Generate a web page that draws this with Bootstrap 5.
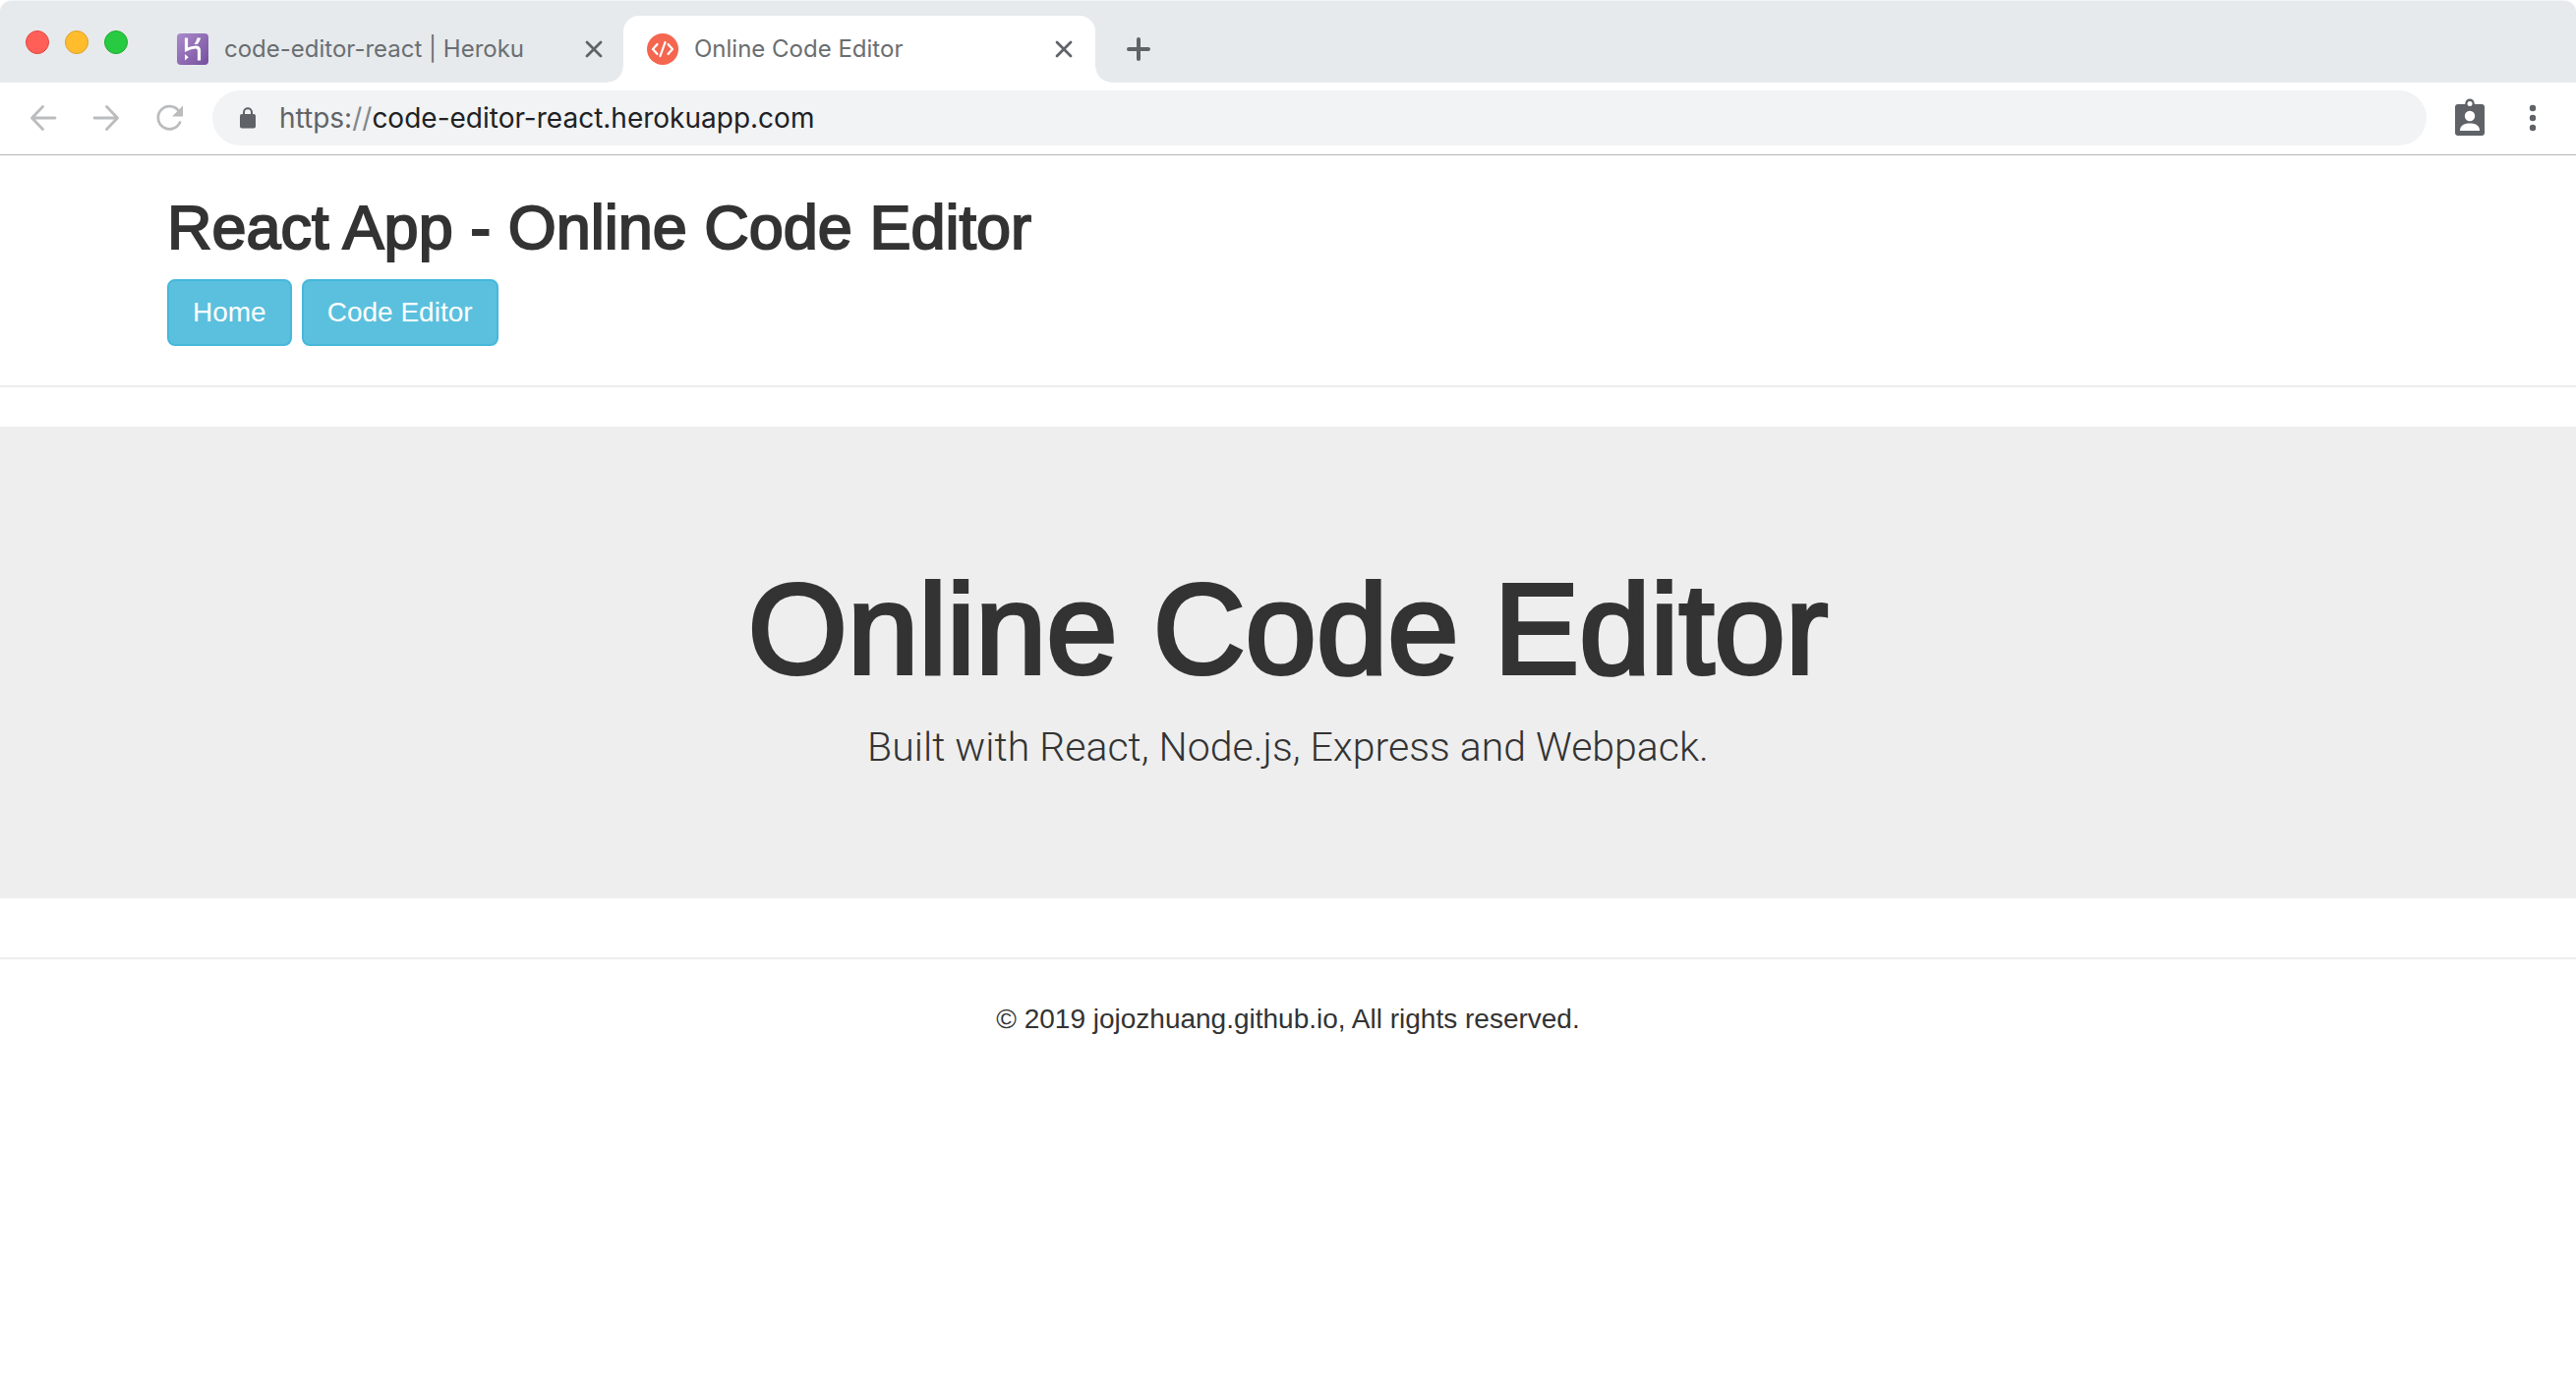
<!DOCTYPE html>
<html lang="en">
<head>
<meta charset="utf-8">
<meta name="viewport" content="width=device-width, initial-scale=1">
<title>Online Code Editor</title>
<link rel="stylesheet" href="https://cdn.jsdelivr.net/npm/bootstrap@5.3.0/dist/css/bootstrap.min.css">
<style>
  body { font-family: "Liberation Sans", Arial, sans-serif; font-size: 28px; line-height: 40px; color: #333; background: #fff; }
  svg { display: block; flex: none; }
  .chrome-ui { font-family: Inter, Roboto, sans-serif; }
  .chrome-ui button { background: none; border: 0; padding: 0; }
  .tab-strip { background: #e6eaed; border-top: 1px solid #f3f5f6; border-radius: 12px 12px 0 0; height: 84px; }
  .lights { gap: 16px; padding: 0 26px 29px 26px; }
  .chrome-ui .lights button { width: 24px; height: 24px; border-radius: 50%; border: 1px solid; }
  .chrome-ui .lights .light-close { background: #ff5f57; border-color: #e2463f; }
  .chrome-ui .lights .light-min { background: #ffbd2e; border-color: #dfa023; }
  .chrome-ui .lights .light-max { background: #28ca42; border-color: #1bac2c; }
  .page-tab { width: 480px; height: 68px; padding: 0 22px 0 24px; gap: 16px; color: #6a6e71; font-size: 24px; line-height: 32px; }
  .page-tab.idle { width: 478px; padding-right: 20px; }
  .page-tab.current { background: #fff; border-radius: 16px 16px 0 0; }
  .page-tab.current::before, .page-tab.current::after { content: ""; position: absolute; bottom: 0; width: 16px; height: 16px; }
  .page-tab.current::before { right: 100%; background: radial-gradient(circle at 0 0, transparent 15px, #fff 16px); }
  .page-tab.current::after { left: 100%; background: radial-gradient(circle at 100% 0, transparent 15px, #fff 16px); }
  .new-tab { height: 68px; margin-left: 32px; }
  .tool-row { height: 74px; padding: 0 32px 1px 28px; border-bottom: 1px solid #b3b4b6; }
  .nav-tools { gap: 32px; padding-right: 28px; }
  .address { height: 56px; padding: 0 28px; gap: 24px; border-radius: 28px; background: #f1f3f4; color: #202124; font-size: 28px; line-height: 40px; }
  .address .scheme { color: #5f6368; }
  .address .slashes { color: #80868b; }
  .right-tools { padding-left: 26px; gap: 34px; }
  .site-width { max-width: 2340px; padding: 0 30px; }
  .site-head { padding-top: 40px; padding-bottom: 40px; border-bottom: 2px solid #eee; }
  .site-title { font-size: 63px; line-height: 66px; font-weight: 400; margin: 0 0 20px; -webkit-text-stroke: 2px #333; }
  .btn-sky { --bs-btn-color: #fff; --bs-btn-bg: #5bc0de; --bs-btn-border-color: #46b8da; --bs-btn-hover-color: #fff; --bs-btn-hover-bg: #31b0d5; --bs-btn-hover-border-color: #269abc; --bs-btn-border-width: 2px; --bs-btn-border-radius: 8px; --bs-btn-padding-x: 24px; --bs-btn-padding-y: 12px; --bs-btn-font-size: 28px; --bs-btn-line-height: 40px; }
  .btn-row { gap: 10px; }
  .hero { background: #eee; margin: 40px 0 60px; padding: 136px 0 124px; }
  .hero-title { font-size: 130px; line-height: 140px; font-weight: 400; margin: 0 0 20px; -webkit-text-stroke: 4px #333; }
  .hero-text { font-family: Roboto, sans-serif; font-size: 41px; line-height: 60px; font-weight: 300; margin: 0; }
  .site-foot { border-top: 2px solid #eee; padding-top: 41px; }
</style>
<script src="https://cdn.jsdelivr.net/npm/bootstrap@5.3.0/dist/js/bootstrap.bundle.min.js"></script>
</head>
<body>
<div class="chrome-ui">
  <div class="tab-strip d-flex align-items-end">
    <div class="lights d-flex">
      <button class="light-close" aria-label="Close window"></button>
      <button class="light-min" aria-label="Minimize window"></button>
      <button class="light-max" aria-label="Zoom window"></button>
    </div>
    <div class="page-tab idle d-flex align-items-center">
      <svg width="32" height="32" viewBox="0 0 32 32"><defs><linearGradient id="plum" x1="0" y1="0" x2="1" y2="1"><stop offset="0" stop-color="#a98acb"/><stop offset="1" stop-color="#764f9d"/></linearGradient></defs><rect width="32" height="32" rx="4" fill="url(#plum)"/><path d="M9.500 4.500V16.500C13 15 16.500 14 19 14C21.500 14 22.500 15.500 22.500 17.500V27.500" fill="none" stroke="#fff" stroke-width="3.200"/><path d="M8 21v6.500l3.700-3.300zM20.500 4.500h3.500c-.4 2.300-1.500 4.500-3.200 6.500h-3.400c1.700-2 2.700-4.200 3.100-6.500z" fill="#fff"/></svg>
      <span class="flex-grow-1 text-truncate">code-editor-react | Heroku</span>
      <button aria-label="Close tab"><svg width="20" height="20" viewBox="0 0 20 20"><path d="M3 3l14 14M17 3L3 17" stroke="#5f6368" stroke-width="2.800" stroke-linecap="round"/></svg></button>
    </div>
    <div class="page-tab current position-relative d-flex align-items-center">
      <svg width="32" height="32" viewBox="0 0 32 32"><circle cx="16" cy="16" r="16" fill="#f4664f"/><path d="M10.500 11L6 16l4.500 5M21.500 11L26 16l-4.500 5M18.500 9l-5 14" fill="none" stroke="#fff" stroke-width="2.200" stroke-linecap="round" stroke-linejoin="round"/></svg>
      <span class="flex-grow-1 text-truncate">Online Code Editor</span>
      <button aria-label="Close tab"><svg width="20" height="20" viewBox="0 0 20 20"><path d="M3 3l14 14M17 3L3 17" stroke="#5f6368" stroke-width="2.800" stroke-linecap="round"/></svg></button>
    </div>
    <button class="new-tab" aria-label="New tab"><svg width="24" height="24" viewBox="0 0 24 24"><path d="M12 2v20M2 12h20" stroke="#5f6368" stroke-width="4" stroke-linecap="round"/></svg></button>
  </div>
  <div class="tool-row d-flex align-items-center">
    <div class="nav-tools d-flex">
      <button aria-label="Back"><svg width="32" height="32" viewBox="0 0 32 32"><path d="M28 16H5M15.500 4.500L4.500 16L15.500 27.500" fill="none" stroke="#babcbe" stroke-width="2.800" stroke-linecap="round" stroke-linejoin="round"/></svg></button>
      <button aria-label="Forward"><svg width="32" height="32" viewBox="0 0 32 32"><path d="M4 16h23M16.500 4.500L27.500 16L16.500 27.500" fill="none" stroke="#babcbe" stroke-width="2.800" stroke-linecap="round" stroke-linejoin="round"/></svg></button>
      <button aria-label="Reload"><svg width="32" height="32" viewBox="0 0 32 32"><path d="M25.500 8.500A11.600 11.600 0 1 0 27 20.500" fill="none" stroke="#babcbe" stroke-width="2.800" stroke-linecap="round"/><path d="M30 3.500v11H19z" fill="#babcbe"/></svg></button>
    </div>
    <div class="address flex-grow-1 d-flex align-items-center">
      <svg width="16" height="22" viewBox="0 0 16 22"><rect y="7" width="16" height="14.500" rx="2" fill="#5f6368"/><path d="M4 8V5.200a4 4 0 0 1 8 0V8" fill="none" stroke="#5f6368" stroke-width="2"/></svg>
      <span><span class="scheme">https:</span><span class="slashes">//</span>code-editor-react.herokuapp.com</span>
    </div>
    <div class="right-tools d-flex align-items-center">
      <button aria-label="Profile"><svg width="36" height="40" viewBox="0 0 36 40"><path fill="#5f6368" d="M6 6h7.200a5 5 0 0 1 9.600 0H30a3 3 0 0 1 3 3v26a3 3 0 0 1-3 3H6a3 3 0 0 1-3-3V9a3 3 0 0 1 3-3z"/><circle cx="18" cy="5" r="4.600" fill="#5f6368"/><circle cx="18" cy="5.500" r="2.500" fill="#fff"/><circle cx="18" cy="18" r="5.200" fill="#fff"/><path d="M8 33c0-5 3.500-7.500 10-7.500s10 2.500 10 7.500z" fill="#fff"/></svg></button>
      <button aria-label="Menu"><svg width="24" height="32" viewBox="0 0 24 32"><g fill="#5f6368"><circle cx="12" cy="6" r="3.200"/><circle cx="12" cy="16" r="3.200"/><circle cx="12" cy="26" r="3.200"/></g></svg></button>
    </div>
  </div>
</div>
<header class="site-head">
  <div class="container-fluid site-width">
    <h2 class="site-title">React App - Online Code Editor</h2>
    <nav class="btn-row d-flex">
      <a class="btn btn-sky" href="#home">Home</a>
      <a class="btn btn-sky" href="#editor">Code Editor</a>
    </nav>
  </div>
</header>
<main class="hero text-center" id="home">
  <h1 class="hero-title">Online Code Editor</h1>
  <p class="hero-text">Built with React, Node.js, Express and Webpack.</p>
</main>
<footer class="site-foot text-center">
  <p class="mb-0">© 2019 jojozhuang.github.io, All rights reserved.</p>
</footer>
</body>
</html>
